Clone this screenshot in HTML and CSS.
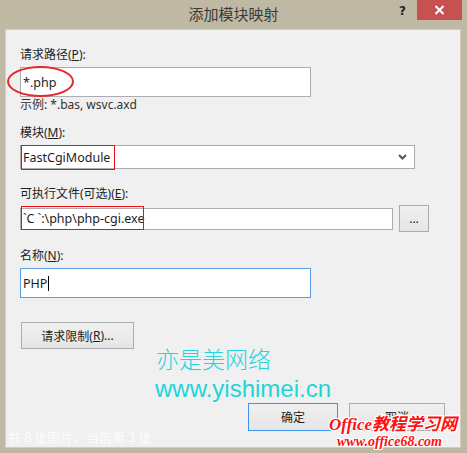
FILE: index.html
```html
<!DOCTYPE html>
<html lang="zh-CN">
<head>
<meta charset="utf-8">
<title>添加模块映射</title>
<link rel="stylesheet" href="styles.css">
</head>
<body>
<div class="window">
  <div class="titlebar">
    <div class="tb-side"></div>
    <div class="tb-title">添加模块映射</div>
    <div class="tb-side tb-right">
      <span class="tb-help">?</span>
      <span class="tb-close">
        <svg width="11" height="10" viewBox="0 0 11 10"><path d="M1.5 1 L9.5 9 M9.5 1 L1.5 9" stroke="#fff" stroke-width="2" fill="none"/></svg>
      </span>
    </div>
  </div>
  <div class="client">
    <div class="label">请求路径(<u>P</u>):</div>
    <div class="textbox tb-path">*.php</div>
    <div class="hint">示例: *.bas, wsvc.axd</div>

    <div class="label lbl-module">模块(<u>M</u>):</div>
    <div class="combo">
      <span>FastCgiModule</span>
      <svg class="combo-arrow" width="9" height="6" viewBox="0 0 9 6"><path d="M1 1 L4.5 4.5 L8 1" stroke="#555" stroke-width="2" fill="none"/></svg>
    </div>

    <div class="label lbl-exe">可执行文件(可选)(<u>E</u>):</div>
    <div class="exe-row">
      <div class="textbox tb-exe">ˋC ˋ:\php\php-cgi.exe</div>
      <div class="btn btn-browse">...</div>
    </div>

    <div class="label lbl-name">名称(<u>N</u>):</div>
    <div class="textbox tb-name focused">PHP<span class="caret"></span></div>

    <div class="btn btn-limit">请求限制(<u>R</u>)...</div>

    <div class="actions">
      <div class="btn btn-action default">确定</div>
      <div class="btn btn-action">取消</div>
    </div>

    <div class="mark ellipse"></div>
    <div class="mark rect rect-module"></div>
    <div class="mark rect rect-exe"></div>
    <div class="wm-cn">亦是美网络</div>
    <div class="wm-url">www.yishimei.cn</div>
    <div class="caption">共 8 张图片，当前第 3 张</div>
    <div class="office">
      <div class="office-1">Office教程学习网</div>
      <div class="office-2">www.office68.com</div>
    </div>
  </div>
</div>
</body>
</html>
```

FILE: styles.css
```css
* { box-sizing: border-box; }
html, body { margin: 0; padding: 0; }
body {
  width: 467px;
  height: 453px;
  overflow: hidden;
  font-family: "Noto Sans", "Noto Sans CJK SC", sans-serif;
  font-size: 12px;
  color: #1e1e1e;
}
.window {
  width: 467px;
  height: 453px;
  background: #bfb8a3;
  display: flex;
  flex-direction: column;
}
.titlebar {
  height: 29px;
  display: grid;
  grid-template-columns: 1fr auto 1fr;
  align-items: start;
}
.tb-title {
  font-family: "Noto Sans CJK SC", sans-serif;
  font-size: 15px;
  line-height: 18px;
  color: #3a3a3a;
  padding-top: 5px;
}
.tb-right {
  display: flex;
  justify-content: flex-end;
  align-items: flex-start;
  padding-right: 5px;
}
.tb-help {
  font-family: "DejaVu Sans", sans-serif;
  font-weight: bold;
  font-size: 12px;
  line-height: 14px;
  color: #222;
  margin-top: 4px;
  margin-right: 11px;
}
.tb-close {
  width: 45px;
  height: 20px;
  background: #c75050;
  display: flex;
  align-items: center;
  justify-content: center;
}
.client {
  position: relative;
  flex: 1;
  margin: 0 6px 5px 5px;
  background: #f0f0f0;
  border: 1px solid #d2cdbf;
  padding: 17px 15px 0 14px;
  display: flex;
  flex-direction: column;
  align-items: flex-start;
}
.label {
  line-height: 16px;
  height: 16px;
  white-space: nowrap;
}
.label u, .btn u { text-decoration: underline; text-underline-offset: 1px; }
.textbox {
  background: #fff;
  border: 1px solid #abadb3;
  padding-left: 2px;
  display: flex;
  align-items: center;
  white-space: nowrap;
  font-size: 12.5px;
}
.tb-path {
  margin-top: 4px;
  width: 291px;
  height: 30px;
}
.hint {
  margin-top: 2px;
  line-height: 12px;
  height: 12px;
  color: #333;
}
.lbl-module { margin-top: 14px; }
.combo {
  margin-top: 4px;
  width: 395px;
  height: 24px;
  background: #fff;
  border: 1px solid #acacac;
  display: flex;
  align-items: center;
  justify-content: space-between;
  padding: 0 7px 0 2px;
  font-size: 12.5px;
}
.lbl-exe { margin-top: 17px; }
.exe-row {
  margin-top: 3px;
  display: flex;
  align-items: center;
  gap: 6px;
}
.tb-exe {
  width: 373px;
  height: 22px;
}
.btn {
  border: 1px solid #acacac;
  background: linear-gradient(#f0f0f0, #e5e5e5);
  display: flex;
  align-items: center;
  justify-content: center;
  white-space: nowrap;
}
.btn-browse {
  width: 30px;
  height: 27px;
  font-size: 12px;
}
.lbl-name { margin-top: 16px; }
.tb-name {
  margin-top: 4px;
  width: 291px;
  height: 30px;
}
.focused { border-color: #5a9de3; }
.caret {
  display: inline-block;
  width: 1px;
  height: 15px;
  background: #000;
  margin-left: 1px;
}
.btn-limit {
  margin-top: 24px;
  margin-left: 1px;
  width: 113px;
  height: 27px;
}
.actions {
  margin-top: 54px;
  align-self: stretch;
  display: flex;
  justify-content: flex-end;
  gap: 11px;
}
.btn-action {
  height: 28px;
}
.btn-action:first-child { width: 90px; }
.btn-action:last-child { width: 96px; }
.default { border-color: #3c95e8; }

.mark { position: absolute; }
.ellipse {
  left: 1px;
  top: 36px;
  width: 67px;
  height: 31px;
  border: 2px solid #e4282d;
  border-radius: 50%;
}
.rect { border: 1px solid #e81010; }
.rect-module {
  left: 15px;
  top: 115px;
  width: 94px;
  height: 25px;
}
.rect-exe {
  left: 15px;
  top: 176px;
  width: 123px;
  height: 24px;
}
.wm-cn {
  position: absolute;
  left: 150px;
  top: 317px;
  font-family: "Noto Sans CJK SC", sans-serif;
  font-weight: 300;
  font-size: 23px;
  line-height: 23px;
  color: #25d3da;
}
.wm-url {
  position: absolute;
  left: 149px;
  top: 347px;
  font-family: "Liberation Sans", sans-serif;
  font-size: 24px;
  line-height: 24px;
  color: #20d4da;
}
.caption {
  position: absolute;
  left: 2px;
  top: 399px;
  font-family: "Noto Sans CJK SC", sans-serif;
  font-size: 13px;
  line-height: 15px;
  color: rgba(255, 255, 255, 0.85);
}
.office {
  position: absolute;
  left: 323px;
  top: 386px;
  color: #ff1010;
  font-weight: bold;
  font-style: italic;
  text-shadow: 1px 0 #fff, -1px 0 #fff, 0 1px #fff, 0 -1px #fff, 1px 1px #fff, -1px -1px #fff, 1px -1px #fff, -1px 1px #fff;
}
.office-1 {
  font-family: "Liberation Serif", "Noto Sans CJK SC", serif;
  font-size: 17px;
  line-height: 18px;
}
.office-2 {
  font-family: "Liberation Serif", serif;
  font-size: 14px;
  line-height: 15px;
  margin-left: 8px;
}
```
